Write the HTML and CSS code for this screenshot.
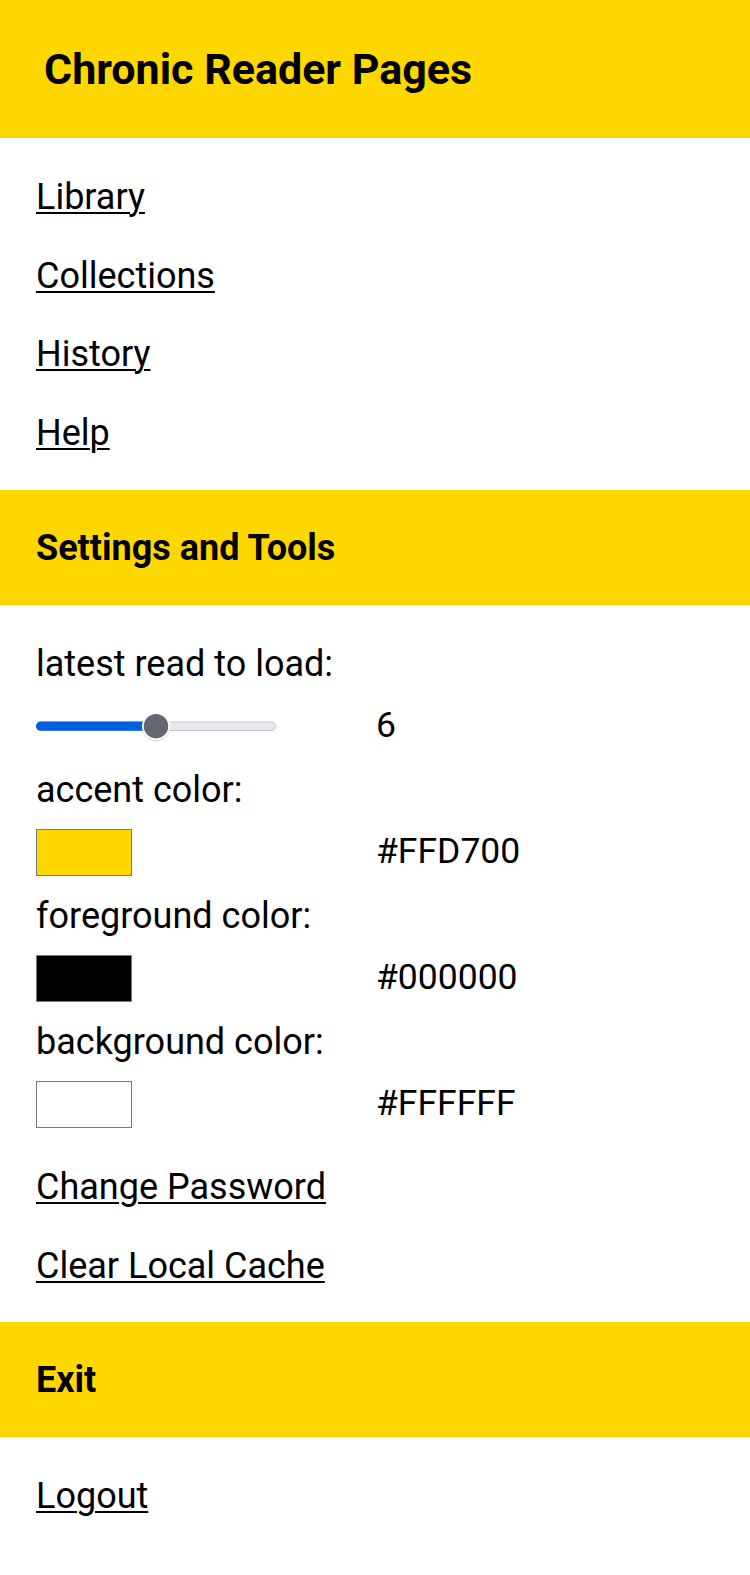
FILE: index.html
```html
<!DOCTYPE html>
<html lang="en">
<head>
<meta charset="utf-8">
<title>Chronic Reader Pages</title>
<link rel="stylesheet" href="styles.css">
</head>
<body>
<header class="topbar">
  <h1 class="title">Chronic Reader Pages</h1>
</header>
<nav class="links">
  <a href="#">Library</a>
  <a href="#">Collections</a>
  <a href="#">History</a>
  <a href="#">Help</a>
</nav>
<h2 class="band">Settings and Tools</h2>
<section class="settings">
  <div class="grid">
    <label class="label">latest read to load:</label>
    <div class="control">
      <svg class="range" width="242" height="32" viewBox="0 0 242 32">
        <rect x="0.5" y="12" width="239" height="8.5" rx="4.25" fill="#e9e9ed" stroke="#c4c4cb"/>
        <rect x="0" y="11.6" width="124" height="9.2" rx="4.6" fill="#0060df"/>
        <circle cx="120" cy="17.5" r="14" fill="rgba(0,0,0,0.12)"/>
        <circle cx="120" cy="16.2" r="14" fill="#ffffff"/>
        <circle cx="120" cy="16.2" r="12.2" fill="#676774"/>
      </svg>
    </div>
    <span class="value">6</span>
    <label class="label">accent color:</label>
    <div class="control"><span class="swatch swatch-accent"></span></div>
    <span class="value">#FFD700</span>
    <label class="label">foreground color:</label>
    <div class="control"><span class="swatch swatch-fg"></span></div>
    <span class="value">#000000</span>
    <label class="label">background color:</label>
    <div class="control"><span class="swatch swatch-bg"></span></div>
    <span class="value">#FFFFFF</span>
  </div>
  <div class="links links-tools">
    <a href="#">Change Password</a>
    <a href="#">Clear Local Cache</a>
  </div>
</section>
<h2 class="band">Exit</h2>
<nav class="links">
  <a href="#">Logout</a>
</nav>
</body>
</html>
```

FILE: styles.css
```css
* { box-sizing: border-box; }
html, body {
  margin: 0;
  padding: 0;
  background: #ffffff;
  color: #000000;
  font-family: Roboto, "Liberation Sans", sans-serif;
}
.topbar {
  background: #FFD700;
  height: 138px;
  padding: 43.5px 44px 0;
}
.title {
  margin: 0;
  font-size: 43px;
  font-weight: 700;
  line-height: 50px;
}
.links {
  display: flex;
  flex-direction: column;
  align-items: flex-start;
  padding: 20px 36px 18px;
}
.links a {
  color: #000000;
  font-size: 36px;
  line-height: 78.5px;
  text-decoration: underline;
  text-decoration-thickness: 2px;
  text-underline-offset: 3px;
}
.band {
  margin: 0;
  background: #FFD700;
  height: 115px;
  padding: 36.5px 36px 0;
  font-size: 36px;
  font-weight: 700;
  line-height: 42px;
}
.settings {
  padding-top: 27px;
}
.grid {
  display: grid;
  grid-template-columns: 339px 1fr;
  grid-auto-rows: 63px;
  align-items: center;
  padding: 0 36px;
  font-size: 36px;
}
.label {
  grid-column: 1 / 3;
  line-height: 42px;
}
.control {
  display: flex;
  align-items: center;
}
.range { display: block; margin-bottom: 2px; }
.value {
  line-height: 42px;
  font-size: 35.5px;
  padding-left: 1px;
  margin-bottom: 4px;
}
.swatch {
  display: block;
  width: 96px;
  height: 47px;
  border: 1px solid #7a7a7a;
}
.swatch-accent { background: #FFD700; }
.swatch-fg { background: #000000; }
.swatch-bg { background: #FFFFFF; }
.links-tools {
  padding-top: 12px;
  padding-bottom: 17px;
}
```
